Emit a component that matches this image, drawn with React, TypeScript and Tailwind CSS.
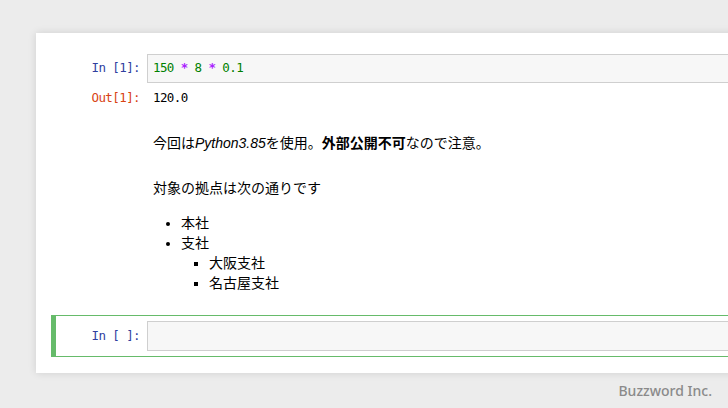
import React from 'react';

const mono = "font-['DejaVu_Sans_Mono',monospace] text-[12.5px] tracking-[-0.6px]";
const body = "font-['Liberation_Sans','Noto_Sans_CJK_JP',sans-serif] text-[14px]";

const Prompt: React.FC<{ label: string; out?: boolean }> = ({ label, out }) => (
  <div className={`w-[91px] shrink-0 whitespace-pre pr-[7px] text-right ${mono} ${out ? 'text-[#d84315]' : 'text-[#303f9f]'}`}>
    {label}
  </div>
);

const App: React.FC = () => {
  return (
    <div className="relative h-[408px] w-[728px] overflow-hidden bg-[#ececec]">
      <div className="ml-[36px] mt-[33px] h-[340px] w-[720px] bg-white pt-[21px] shadow-[0_0_8px_rgba(0,0,0,0.12)]">
        {/* code cell */}
        <div className="ml-[15px] border-l-[5px] border-transparent">
          <div className="flex items-center">
            <Prompt label="In [1]:" />
            <div className={`flex h-[29px] flex-1 items-center whitespace-pre border border-[#cfcfcf] bg-[#f7f7f7] pl-[5px] ${mono}`}>
              <span className="text-[#008000]">150</span>
              <span> </span>
              <span className="font-bold text-[#aa22ff]">*</span>
              <span> </span>
              <span className="text-[#008000]">8</span>
              <span> </span>
              <span className="font-bold text-[#aa22ff]">*</span>
              <span> </span>
              <span className="text-[#008000]">0.1</span>
            </div>
          </div>
          <div className="mt-[5px] flex h-[20px] items-center">
            <Prompt label="Out[1]:" out />
            <div className={`pl-[6px] text-black ${mono}`}>120.0</div>
          </div>
        </div>

        {/* markdown cell */}
        <div className={`ml-[117px] mt-[25px] leading-[20px] text-black ${body}`}>
          <p>
            今回は<em>Python3.85</em>を使用。<strong>外部公開不可</strong>なので注意。
          </p>
          <p className="mt-[25px]">対象の拠点は次の通りです</p>
          <ul className="mt-[15px] list-disc pl-[28px]">
            <li>本社</li>
            <li>
              支社
              <ul className="list-[square] pl-[28px]">
                <li>大阪支社</li>
                <li>名古屋支社</li>
              </ul>
            </li>
          </ul>
        </div>

        {/* selected empty cell */}
        <div className="ml-[15px] mt-[22px] flex h-[42px] items-center border border-l-[5px] border-[#66bb6a]">
          <Prompt label="In [ ]:" />
          <div className="h-[30px] flex-1 border border-[#cfcfcf] bg-[#f7f7f7]" />
        </div>
      </div>

      <div className="absolute right-[16px] top-[380px] font-['Noto_Sans',sans-serif] text-[14px] font-medium text-[#8a8a8a]">
        Buzzword Inc.
      </div>
    </div>
  );
};

export default App;
